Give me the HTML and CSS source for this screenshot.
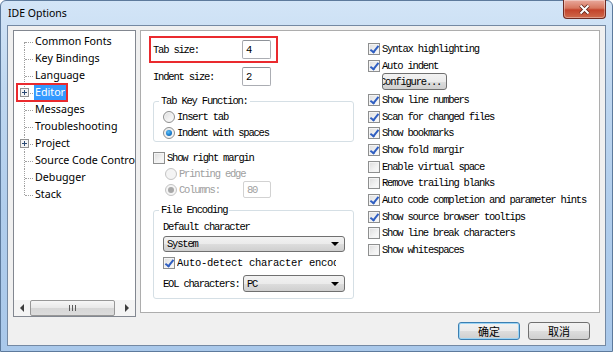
FILE: index.html
```html
<!DOCTYPE html>
<html lang="en">
<head>
    <meta charset="UTF-8">
    <title>IDE Options</title>
    <link rel="stylesheet" href="styles.css">
</head>
<body>
    <div class="window">
        <div class="titlebar">
            <span class="title">IDE Options</span>
            <button class="close-btn">
                <svg width="13" height="11" viewBox="0 0 13 11"><path d="M2.5 1.5 L10.5 9.5 M10.5 1.5 L2.5 9.5" stroke="#5a2219" stroke-width="3.6"/><path d="M2.5 1.5 L10.5 9.5 M10.5 1.5 L2.5 9.5" stroke="#fff" stroke-width="2"/></svg>
            </button>
        </div>
        <div class="client">
            <div class="main">
                <div class="tree">
                    <ul class="tree-list">
                        <li><span class="node">Common Fonts</span></li>
                        <li><span class="node">Key Bindings</span></li>
                        <li><span class="node">Language</span></li>
                        <li>
                            <span class="expander"><svg width="9" height="9" viewBox="0 0 9 9"><rect x="0.5" y="0.5" width="8" height="8" fill="#f4f4f4" stroke="#919191"/><path d="M2 4.5 H7 M4.5 2 V7" stroke="#2b4a73"/></svg></span>
                            <span class="node selected">Editor</span>
                        </li>
                        <li><span class="node">Messages</span></li>
                        <li><span class="node">Troubleshooting</span></li>
                        <li>
                            <span class="expander"><svg width="9" height="9" viewBox="0 0 9 9"><rect x="0.5" y="0.5" width="8" height="8" fill="#f4f4f4" stroke="#919191"/><path d="M2 4.5 H7 M4.5 2 V7" stroke="#2b4a73"/></svg></span>
                            <span class="node">Project</span>
                        </li>
                        <li><span class="node">Source Code Control</span></li>
                        <li><span class="node">Debugger</span></li>
                        <li><span class="node">Stack</span></li>
                    </ul>
                    <div class="hscroll">
                        <span class="scroll-btn"><span class="tri tri-left"></span></span>
                        <div class="track">
                            <div class="thumb"><span class="grip"></span></div>
                        </div>
                        <span class="scroll-btn"><span class="tri tri-right"></span></span>
                    </div>
                    <div class="mark mark-editor"></div>
                </div>

                <div class="panel">
                    <div class="col-left">
                        <div class="field-row">
                            <span class="field-label">Tab size:</span>
                            <span class="textbox">4</span>
                        </div>
                        <div class="field-row indent-row">
                            <span class="field-label">Indent size:</span>
                            <span class="textbox">2</span>
                        </div>

                        <fieldset class="group group-tab">
                            <legend>Tab Key Function:</legend>
                            <div class="opt"><span class="radio"></span>Insert tab</div>
                            <div class="opt"><span class="radio on"></span>Indent with spaces</div>
                        </fieldset>

                        <div class="opt margin-row"><span class="check"></span>Show right margin</div>
                        <div class="opt sub disabled print-row"><span class="radio"></span>Printing edge</div>
                        <div class="opt sub disabled cols-row">
                            <span class="radio on"></span>
                            <span class="cols-label">Columns:</span>
                            <span class="textbox">80</span>
                        </div>

                        <fieldset class="group group-enc">
                            <legend>File Encoding</legend>
                            <div class="enc-label">Default character</div>
                            <div class="select select-wide"><span>System</span><span class="caret"></span></div>
                            <div class="opt autodetect"><span class="check on"></span><span class="clip">Auto-detect character encoding</span></div>
                            <div class="eol-row">
                                <span class="eol-label">EOL characters:</span>
                                <div class="select select-eol"><span>PC</span><span class="caret"></span></div>
                            </div>
                        </fieldset>
                    </div>

                    <div class="col-right">
                        <div class="opt row"><span class="check on"></span>Syntax highlighting</div>
                        <div class="opt row"><span class="check on"></span>Auto indent</div>
                        <button class="configure">Configure...</button>
                        <div class="opt row"><span class="check on"></span>Show line numbers</div>
                        <div class="opt row"><span class="check on"></span>Scan for changed files</div>
                        <div class="opt row"><span class="check on"></span>Show bookmarks</div>
                        <div class="opt row"><span class="check on"></span>Show fold margir</div>
                        <div class="opt row"><span class="check"></span>Enable virtual space</div>
                        <div class="opt row"><span class="check"></span>Remove trailing blanks</div>
                        <div class="opt row"><span class="check on"></span>Auto code completion and parameter hints</div>
                        <div class="opt row"><span class="check on"></span>Show source browser tooltips</div>
                        <div class="opt row"><span class="check"></span>Show line break characters</div>
                        <div class="opt row"><span class="check"></span>Show whitespaces</div>
                    </div>

                    <div class="mark mark-tab"></div>
                </div>
            </div>

            <div class="footer">
                <button class="btn btn-default">确定</button>
                <button class="btn">取消</button>
            </div>
        </div>
    </div>
</body>
</html>
```

FILE: styles.css
```css
* {
    box-sizing: border-box;
}

body {
    margin: 0;
    width: 613px;
    height: 352px;
    overflow: hidden;
    background: #fff;
    font-family: "Noto Sans", "Open Sans", sans-serif;
}

.window {
    width: 613px;
    height: 352px;
    display: flex;
    flex-direction: column;
    padding: 0 6px 5px;
    border: 1px solid #5d7a9c;
    border-radius: 6px 6px 0 0;
    background: linear-gradient(180deg, #d3e5f7 0%, #bfd7f0 25%, #b0cdec 60%, #a9c8ea 100%);
}

/* title bar */
.titlebar {
    height: 24px;
    display: flex;
    justify-content: space-between;
    align-items: flex-start;
}

.title {
    padding: 5px 0 0 1px;
    font-size: 10.5px;
    color: #000;
}

.close-btn {
    width: 43px;
    height: 19px;
    margin-top: -1px;
    padding: 0;
    display: flex;
    align-items: center;
    justify-content: center;
    border: 1px solid #6d2a22;
    border-top: none;
    border-radius: 0 0 4px 4px;
    background: linear-gradient(180deg, #e9a99c 0%, #d7775f 45%, #c3432b 55%, #cf6a4c 100%);
    box-shadow: inset 0 0 0 1px rgba(255,255,255,.35);
}

/* client area */
.client {
    flex: 1;
    display: flex;
    flex-direction: column;
    padding: 4px 5px 0 5px;
    border: 1px solid #7489a3;
    background: #f0f0f0;
}

.main {
    display: flex;
    align-items: flex-start;
    gap: 4px;
    height: 287px;
}

/* tree */
.tree {
    position: relative;
    width: 123px;
    height: 287px;
    display: flex;
    flex-direction: column;
    border: 1px solid #828790;
    background: #fff;
}

.tree-list {
    flex: 1;
    margin: 0;
    padding: 2px 0 0;
    list-style: none;
    font-size: 10.7px;
    color: #000;
}

.tree-list li {
    position: relative;
    height: 17px;
    display: flex;
    align-items: center;
    padding-left: 20px;
    white-space: nowrap;
    overflow: hidden;
}

.tree-list li::before {
    content: "";
    position: absolute;
    left: 10px;
    top: 0;
    bottom: 0;
    border-left: 1px dotted #a0a0a0;
}

.tree-list li:first-child::before {
    top: 50%;
}

.tree-list li:last-child::before {
    bottom: 50%;
}

.tree-list li::after {
    content: "";
    position: absolute;
    left: 11px;
    top: 50%;
    width: 8px;
    border-top: 1px dotted #a0a0a0;
}

.expander {
    position: absolute;
    left: 6px;
    top: 4px;
    z-index: 1;
    display: flex;
}

.node {
    padding: 0 1px;
    line-height: 15px;
}

.node.selected {
    padding: 0 2px 0 1px;
    background: #3399ff;
    color: #fff;
}

.hscroll {
    height: 16px;
    display: flex;
    background: #f4f4f4;
}

.scroll-btn {
    width: 16px;
    display: flex;
    align-items: center;
    justify-content: center;
}

.tri {
    width: 0;
    height: 0;
    border-top: 4px solid transparent;
    border-bottom: 4px solid transparent;
}

.tri-left {
    border-right: 4px solid #3c3c3c;
}

.tri-right {
    border-left: 4px solid #3c3c3c;
}

.track {
    flex: 1;
    display: flex;
    padding: 0 4px 0 0;
}

.thumb {
    width: 85px;
    display: flex;
    align-items: center;
    justify-content: center;
    border: 1px solid #979797;
    border-radius: 2px;
    background: linear-gradient(180deg, #f6f6f6 0%, #e8e8e8 50%, #d6d6d6 51%, #dcdcdc 100%);
}

.grip {
    width: 7px;
    height: 6px;
    background: repeating-linear-gradient(90deg, #5a5a5a 0, #5a5a5a 1px, transparent 1px, transparent 3px);
}

/* red annotation boxes */
.mark {
    position: absolute;
    border: 2px solid #ea2a2e;
    pointer-events: none;
}

.mark-editor {
    left: 2px;
    top: 52px;
    width: 52px;
    height: 19px;
}

.mark-tab {
    left: 8px;
    top: 5px;
    width: 129px;
    height: 27px;
}

/* options panel */
.panel {
    position: relative;
    width: 461px;
    height: 283px;
    display: flex;
    gap: 14px;
    padding: 9px 0 0 12px;
    border: 1px solid #adadad;
    background: #fff;
    font-family: "Liberation Mono", monospace;
    font-size: 10.5px;
    letter-spacing: -1.2px;
    color: #000;
}

.col-left {
    width: 201px;
    display: flex;
    flex-direction: column;
}

.field-row {
    height: 19px;
    display: flex;
    align-items: center;
}

.indent-row {
    margin-top: 8px;
}

.field-label {
    width: 89px;
}

.textbox {
    width: 29px;
    height: 19px;
    display: flex;
    align-items: center;
    padding-left: 3px;
    border: 1px solid #abadb3;
    border-top-color: #8e9299;
    border-radius: 2px;
    background: #fff;
}

.opt {
    height: 16px;
    display: flex;
    align-items: center;
    white-space: nowrap;
}

.check,
.radio {
    position: relative;
    flex: none;
    width: 12px;
    height: 12px;
    margin-right: 2px;
    border: 1px solid #8e8f8f;
    background: linear-gradient(135deg, #dcdcdc 0%, #f2f2f2 60%, #fbfbfb 100%);
    box-shadow: inset 0 0 0 1px #f4f4f4;
}

.check.on::after {
    content: "";
    position: absolute;
    left: 3px;
    top: 0;
    width: 3px;
    height: 7px;
    border: solid #2f5ec1;
    border-width: 0 2px 2px 0;
    transform: rotate(38deg);
}

.radio {
    border-radius: 50%;
}

.radio.on::after {
    content: "";
    position: absolute;
    left: 2px;
    top: 2px;
    width: 6px;
    height: 6px;
    border-radius: 50%;
    background: radial-gradient(circle at 40% 35%, #5fc1f5 0%, #1b7ed0 55%, #114f8f 100%);
}

/* groups */
.group {
    margin: 0;
    padding: 2px 0 0 9px;
    border: 1px solid #d5dfe5;
    border-radius: 3px;
}

.group legend {
    margin-left: -4px;
    padding: 0 2px;
    line-height: 11px;
}

.group-tab {
    margin-top: 10px;
    height: 46px;
}

.margin-row {
    margin-top: 8px;
}

.sub {
    padding-left: 12px;
}

.disabled {
    color: #a0a0a0;
}

.disabled .radio {
    border-color: #c4c4c4;
    background: #f4f4f4;
}

.disabled .radio.on::after {
    background: #a8a8a8;
}

.print-row {
    height: 14px;
    margin-top: 1px;
}

.cols-row {
    height: 17px;
}

.cols-label {
    width: 64px;
}

.cols-row .textbox {
    width: 28px;
    height: 17px;
    border-color: #d2d2d2;
    color: #a0a0a0;
}

.group-enc {
    margin-top: 7px;
    height: 94px;
    padding-top: 4px;
}

.enc-label {
    height: 14px;
    line-height: 14px;
}

.select {
    height: 16px;
    display: flex;
    align-items: center;
    justify-content: space-between;
    padding: 0 5px 0 3px;
    border: 1px solid #707070;
    border-radius: 3px;
    background: linear-gradient(180deg, #f2f2f2 0%, #ebebeb 50%, #dddddd 51%, #cfcfcf 100%);
}

.select-wide {
    width: 182px;
    margin-top: 2px;
}

.caret {
    width: 0;
    height: 0;
    border-left: 4px solid transparent;
    border-right: 4px solid transparent;
    border-top: 4px solid #000;
}

.autodetect {
    margin-top: 3px;
}

.clip {
    width: 159px;
    overflow: hidden;
    letter-spacing: -0.3px;
}

.eol-row {
    height: 17px;
    margin-top: 4px;
    display: flex;
    align-items: center;
}

.eol-label {
    width: 80px;
}

.select-eol {
    width: 102px;
    height: 17px;
}

.col-right {
    flex: 1;
    display: flex;
    flex-direction: column;
    padding-top: 0.7px;
}

.col-right .row {
    height: 16.67px;
}

.configure {
    width: 65px;
    height: 17px;
    margin: -1px 0 1.67px 14px;
    padding: 0;
    overflow: hidden;
    white-space: nowrap;
    text-align: left;
    text-indent: -3px;
    font: inherit;
    letter-spacing: inherit;
    border: 1px solid #707070;
    border-radius: 3px;
    background: linear-gradient(180deg, #f2f2f2 0%, #ebebeb 50%, #dddddd 51%, #cfcfcf 100%);
}

/* dialog buttons */
.footer {
    display: flex;
    justify-content: flex-end;
    gap: 8px;
    padding: 5px 10px 0 0;
}

.btn {
    width: 62px;
    height: 18px;
    padding: 0;
    font-family: "Noto Sans CJK SC", sans-serif;
    font-size: 11px;
    line-height: 16px;
    color: #000;
    border: 1px solid #707070;
    border-radius: 3px;
    background: linear-gradient(180deg, #f2f2f2 0%, #ebebeb 50%, #dddddd 51%, #cfcfcf 100%);
}

.btn-default {
    border-color: #3c7fb1;
    box-shadow: inset 0 0 0 1px #9bd4f5;
}
```
